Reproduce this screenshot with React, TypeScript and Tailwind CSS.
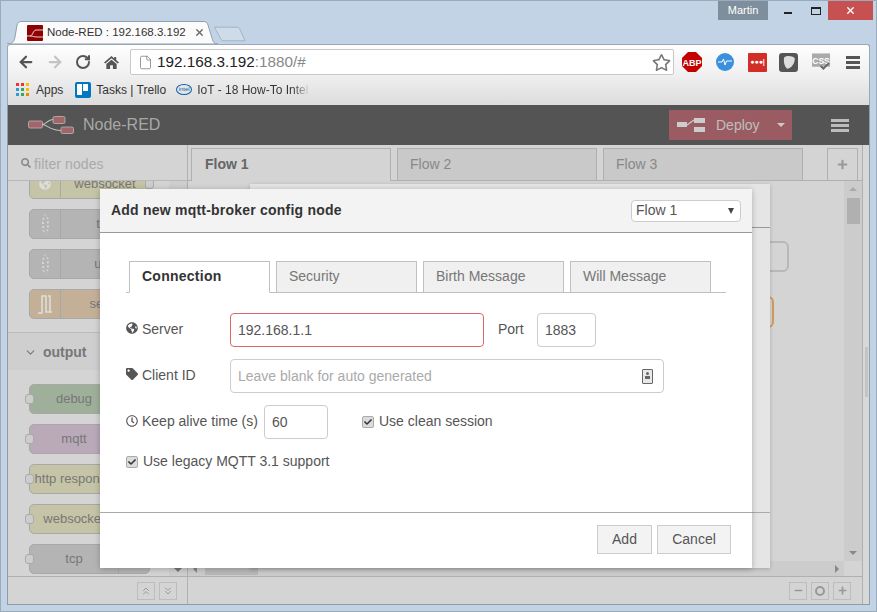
import { FaGlobeAmericas, FaTag, FaRegClock, FaCheck, FaSearch, FaPlus, FaMinus, FaRegStar } from 'react-icons/fa';
import { FiChevronDown } from 'react-icons/fi';
import { ArrowLeft, ArrowRight, RotateCw, File, X, ChevronsUp, ChevronsDown } from 'lucide-react';

function NodeRedLogo({ className, color }: { className: string; color: string }) {
  return (
    <svg viewBox="0 0 46 18" className={className}>
      <path d="M14 8.5 C19 8.5 19 3.5 25 3.5 M14 8.5 C19 8.5 22 14.5 33 14.5" stroke="#c4c4c4" strokeWidth="1.1" fill="none" />
      <rect x="0.5" y="5" width="14" height="7" rx="1.5" fill={color} stroke="#c4c4c4" strokeWidth="0.7" />
      <rect x="25" y="0.5" width="12" height="7" rx="1.5" fill={color} stroke="#c4c4c4" strokeWidth="0.7" />
      <rect x="33" y="11" width="12.5" height="6.5" rx="1.5" fill={color} stroke="#c4c4c4" strokeWidth="0.7" />
    </svg>
  );
}

function Favicon() {
  return (
    <svg viewBox="0 0 16 16" className="w-4 h-4 shrink-0">
      <rect width="16" height="16" rx="1" fill="#8f0000" />
      <path d="M0 11 H3 C6 11 6 5 9 5 H16 M3 11 C6 11 7 12 10 12 H16" stroke="#e8d0d0" strokeWidth="1" fill="none" />
    </svg>
  );
}

function BrowserTabs() {
  return (
    <div className="h-[43px] flex items-start relative shrink-0">
      <div className="relative ml-[6px] mt-[20px] w-[211px] h-[23px]">
        <svg viewBox="0 0 211 23" className="absolute inset-0 w-full h-full">
          <path d="M0 23 C5 23 7 21 8 16 L10 4 C11 1 12 0.5 15 0.5 L196 0.5 C199 0.5 200 1 201 4 L205 17 C206 21 207 23 211 23 Z" fill="#fbfbfb" stroke="#8d9fb0" strokeWidth="1" />
        </svg>
        <div className="relative flex items-center h-full pl-[20px]">
          <Favicon />
          <span className="ml-[4px] text-[11.5px] text-[#333] whitespace-nowrap">Node-RED : 192.168.3.192</span>
          <X size={11} strokeWidth={3} className="ml-[8px] text-[#666]" />
        </div>
      </div>
      <svg viewBox="0 0 34 16" className="w-[33px] h-[16px] mt-[25px] ml-[-4px]">
        <path d="M1 1 H24 C26 1 26 2 27 4 L32 15 H10 C7 15 7 13 6 11 L2 4 C1 2 0 1 1 1 Z" fill="#cedbe8" stroke="#a3b2c1" strokeWidth="1" />
      </svg>
      <div className="ml-auto flex items-start mr-[3px]">
        <div className="w-[50px] h-[19px] bg-[#7f8e9c] text-white text-[11px] leading-[19px] text-center">Martin</div>
        <div className="w-[30px] h-[19px] flex items-center justify-center ml-[5px] pt-[5px]">
          <div className="w-[8px] h-[2px] bg-[#222]" />
        </div>
        <div className="w-[25px] h-[19px] flex items-center justify-center">
          <div className="w-[10px] h-[8px] border border-t-2 border-[#222]" />
        </div>
        <div className="w-[45px] h-[19px] bg-[#c75050] flex items-center justify-center">
          <X size={11} strokeWidth={3} className="text-white" />
        </div>
      </div>
    </div>
  );
}

function Toolbar() {
  return (
    <div className="h-[61px] bg-gradient-to-b from-[#fefefe] via-[#f0f0f0] to-[#dcdcdc] rounded-t-[3px] border border-b-0 border-[#9aa8b6] shrink-0">
      <div className="flex items-center h-[31px] pt-[3px]">
        <ArrowLeft size={18} strokeWidth={3} className="ml-[9px] text-[#555]" />
        <ArrowRight size={18} strokeWidth={3} className="ml-[11px] text-[#c4c4c4]" />
        <RotateCw size={16} strokeWidth={3} className="ml-[11px] text-[#555]" />
        <svg viewBox="0 0 16 16" className="ml-[13px] w-[15px] h-[15px] text-[#555]">
          <path d="M8 1 L11 3.6 V2 H13 V5.4 L16 8 L14.6 9 L8 3.5 L1.4 9 L0 8 Z M2.5 9.5 L8 5 L13.5 9.5 V15 H9.5 V11 H6.5 V15 H2.5 Z" fill="currentColor" />
        </svg>
        <div className="ml-[11px] w-[544px] h-[26px] bg-white border border-[#c8c8c8] rounded-[2px] flex items-center pl-[7px]">
          <File size={15} strokeWidth={1.2} className="text-[#777]" />
          <span className="ml-[4px] text-[15.3px] text-[#222]">192.168.3.192<span className="text-[#888]">:1880/#</span></span>
          <FaRegStar size={19} className="ml-auto mr-[2px] text-[#777]" />
        </div>
        <svg viewBox="0 0 20 20" className="ml-[8px] w-[20px] h-[20px]">
          <polygon points="6,0 14,0 20,6 20,14 14,20 6,20 0,14 0,6" fill="#c40000" />
          <text x="10" y="13.5" textAnchor="middle" fontSize="9" fontWeight="bold" fill="white">ABP</text>
        </svg>
        <svg viewBox="0 0 18 18" className="ml-[14px] w-[18px] h-[18px]">
          <circle cx="9" cy="9" r="9" fill="#3a8fde" />
          <path d="M2 9 H6 L7.5 6 L9 12 L10.5 8 H16" stroke="white" strokeWidth="1" fill="none" />
        </svg>
        <div className="ml-[14px] w-[19px] h-[19px] bg-[#d32d27] rounded-[1px] flex items-center justify-center text-white text-[7px] font-bold">●●●|</div>
        <svg viewBox="0 0 18 18" className="ml-[12px] w-[19px] h-[19px]">
          <rect width="18" height="18" rx="3" fill="#555" />
          <path d="M5 4 C8 2 13 3 15 5 C15 10 12 14 8 15 C5 13 4 8 5 4 Z" fill="#ddd" />
        </svg>
        <svg viewBox="0 0 20 18" className="ml-[14px] w-[19px] h-[18px]">
          <rect width="19" height="14" fill="#aaa" />
          <text x="9.5" y="11" textAnchor="middle" fontSize="9" fontWeight="bold" fill="white">CSS</text>
          <path d="M9 13 L12 16 L18 10" stroke="#666" strokeWidth="2" fill="none" />
        </svg>
        <div className="ml-[15px] w-[14px] flex flex-col gap-[2px]">
          <div className="h-[3px] bg-[#555]" />
          <div className="h-[3px] bg-[#555]" />
          <div className="h-[3px] bg-[#555]" />
        </div>
      </div>
      <div className="flex items-center h-[27px] text-[12px] text-[#333] pl-[8px]">
        <div className="w-[13px] h-[13px] grid grid-cols-3 gap-[2px]">
          <div className="bg-[#e33]" /><div className="bg-[#e33]" /><div className="bg-[#fb0]" />
          <div className="bg-[#39d]" /><div className="bg-[#3a5]" /><div className="bg-[#fb0]" />
          <div className="bg-[#39d]" /><div className="bg-[#3a5]" /><div className="bg-[#e80]" />
        </div>
        <span className="ml-[7px]">Apps</span>
        <div className="ml-[12px] w-[16px] h-[16px] bg-[#0079bf] rounded-[2px] flex gap-[1px] p-[2px]">
          <div className="w-[5px] h-[11px] bg-white" />
          <div className="w-[5px] h-[7px] bg-white" />
        </div>
        <span className="ml-[5px]">Tasks | Trello</span>
        <div className="ml-[10px] w-[16px] h-[11px] border border-[#0a5fa8] rounded-[50%] text-[6px] leading-[9px] text-[#0a5fa8] text-center">intel</div>
        <span className="ml-[5px] w-[113px] whitespace-nowrap overflow-hidden bg-gradient-to-r from-[#333] from-85% to-transparent bg-clip-text text-transparent">IoT - 18 How-To Intel</span>
      </div>
    </div>
  );
}

function PaletteNode({ label, fill, icon, port, rightIcon }: { label: string; fill: string; icon?: 'wave' | 'socket' | 'serial'; port: 'left' | 'right'; rightIcon?: boolean }) {
  return (
    <div className="relative w-[121px] h-[30px] shrink-0 border border-[#a8a8a8] rounded-[5px] flex text-[13px] text-[#777]" style={{ background: fill }}>
      {port === 'left' && <div className="absolute left-[-5px] top-[9px] w-[9px] h-[10px] rounded-[3px] bg-[#cdcdcd] border border-[#aaa]" />}
      {port === 'right' && <div className="absolute right-[-5px] top-[9px] w-[9px] h-[10px] rounded-[3px] bg-[#cdcdcd] border border-[#aaa]" />}
      {icon && (
        <div className="w-[31px] border-r border-[#a8a8a8] flex items-center justify-center text-[#ddd]">
          {icon === 'wave' && <div className="w-[7px] h-[20px] border-x-2 border-dotted border-[#d5d5d5] rounded-[50%]" />}
          {icon === 'socket' && <FaGlobeAmericas size={12} />}
          {icon === 'serial' && (
            <svg viewBox="0 0 16 20" className="w-[16px] h-[20px]">
              <path d="M1 19 H5 V2 H9 V18 H15 M13 18 V2 H11" stroke="#ddd" strokeWidth="1.6" fill="none" />
            </svg>
          )}
        </div>
      )}
      <div className="flex-1 min-w-0 flex items-center justify-center overflow-hidden whitespace-nowrap leading-[28px]">{label}</div>
      {rightIcon && <div className="w-[31px] border-l border-[#a8a8a8] shrink-0" />}
    </div>
  );
}

function Palette() {
  return (
    <div className="w-[180px] flex flex-col border-r border-[#b0b0b0] shrink-0">
      <div className="h-[36px] flex items-center pl-[13px] border-b border-[#b8b8b8] text-[#aaa] text-[14px] shrink-0">
        <FaSearch size={10} className="text-[#888]" />
        <span className="ml-[3px] mt-[3px] tracking-[0.1px]">filter nodes</span>
      </div>
      <div className="flex-1 relative overflow-hidden">
        <div className="absolute right-0 inset-y-0 w-[18px] bg-[#cecece]" />
        <div className="absolute right-[5px] bottom-[4px] w-0 h-0 border-x-[4px] border-x-transparent border-t-[4px] border-t-[#777]" />
        <div className="flex flex-col mt-[-12px] relative">
          <div className="flex flex-col gap-[10px] pl-[21px]">
            <PaletteNode label="websocket" fill="#c5c4a6" icon="socket" port="right" />
            <PaletteNode label="tcp" fill="#b4b4b4" icon="wave" port="right" />
            <PaletteNode label="udp" fill="#b4b4b4" icon="wave" port="right" />
            <PaletteNode label="serial" fill="#c4b097" icon="serial" port="right" />
          </div>
          <div className="mt-[13px] h-[38px] bg-[#cfcfcf] border-t border-[#bcbcbc] flex items-center pl-[16px] pt-[2px] font-bold text-[14px] text-[#777]">
            <FiChevronDown size={13} className="mr-[6px]" />
            <span>output</span>
          </div>
          <div className="flex flex-col gap-[10px] pl-[21px] mt-[14px]">
            <PaletteNode label="debug" fill="#9fb09a" port="left" rightIcon />
            <PaletteNode label="mqtt" fill="#b9a9b9" port="left" rightIcon />
            <PaletteNode label="http response" fill="#c5c4a6" port="left" rightIcon />
            <PaletteNode label="websocket" fill="#c5c4a6" port="left" rightIcon />
            <PaletteNode label="tcp" fill="#b4b4b4" port="left" rightIcon />
          </div>
        </div>
      </div>
      <div className="h-[28px] border-t border-[#b0b0b0] flex items-center justify-end pr-[10px] gap-[4px] shrink-0">
        <div className="w-[18px] h-[18px] border border-[#bdbdbd] flex items-center justify-center text-[#999]"><ChevronsUp size={12} /></div>
        <div className="w-[18px] h-[18px] border border-[#bdbdbd] flex items-center justify-center text-[#999]"><ChevronsDown size={12} /></div>
      </div>
    </div>
  );
}

function WorkspaceTab({ label, active, ml }: { label: string; active?: boolean; ml: string }) {
  return (
    <div className={`w-[200px] ${ml} border border-b-0 border-[#b0b0b0] flex items-center text-[14px] ${active ? 'h-[33px] mb-[-1px] pb-[1px] pl-[13px] relative bg-[#d4d4d4] font-bold text-[#666]' : 'h-[32px] pl-[12px] bg-[#c9c9c9] text-[#888]'}`}>
      {label}
    </div>
  );
}

function Workspace() {
  return (
    <div className="flex-1 flex flex-col min-w-0">
      <div className="h-[36px] border-b border-[#b0b0b0] flex items-end shrink-0">
        <WorkspaceTab label="Flow 1" active ml="ml-[3px]" />
        <WorkspaceTab label="Flow 2" ml="ml-[6px]" />
        <WorkspaceTab label="Flow 3" ml="ml-[6px]" />
        <div className="w-[31px] h-[32px] ml-[24px] border border-b-0 border-[#b0b0b0] flex items-center justify-center text-[#999]">
          <FaPlus size={11} />
        </div>
      </div>
      <div className="flex-1 flex flex-col min-h-0">
        <div className="flex-1 flex min-h-0">
          <div className="flex-1 relative">
            <div className="absolute left-[560px] top-[60px] w-[41px] h-[31px] border-2 border-[#b8b8b8] rounded-[6px]" />
            <div className="absolute left-[546px] top-[115px] w-[40px] h-[32px] border-2 border-[#d29a5c] rounded-[6px]" />
          </div>
          <div className="w-[18px] bg-[#cccccc] flex flex-col items-center pt-[6px]">
            <div className="w-0 h-0 border-x-[4px] border-x-transparent border-b-[4px] border-b-[#aaa]" />
            <div className="w-[13px] h-[26px] bg-[#b0b0b0] mt-[7px]" />
            <div className="mt-auto mb-[6px] w-0 h-0 border-x-[4px] border-x-transparent border-t-[4px] border-t-[#888]" />
          </div>
        </div>
        <div className="h-[15px] bg-[#cccccc] flex items-center shrink-0">
          <div className="ml-[5px] w-0 h-0 border-y-[4px] border-y-transparent border-r-[4px] border-r-[#888]" />
          <div className="ml-[8px] w-[53px] h-[13px] bg-[#b8b8b8]" />
          <div className="ml-auto mr-[5px] w-0 h-0 border-y-[4px] border-y-transparent border-l-[4px] border-l-[#888]" />
          <div className="w-[18px] h-full bg-[#d4d4d4]" />
        </div>
      </div>
      <div className="h-[28px] border-t border-[#b0b0b0] flex items-center justify-end pr-[11px] gap-[4px] shrink-0">
        <div className="w-[18px] h-[18px] border border-[#bdbdbd] flex items-center justify-center text-[#999]"><FaMinus size={9} /></div>
        <div className="w-[18px] h-[18px] border border-[#bdbdbd] flex items-center justify-center">
          <div className="w-[10px] h-[10px] rounded-full border-2 border-[#999]" />
        </div>
        <div className="w-[18px] h-[18px] border border-[#bdbdbd] flex items-center justify-center text-[#999]"><FaPlus size={9} /></div>
      </div>
    </div>
  );
}

function NodeRedHeader() {
  return (
    <div className="h-[40px] bg-[#545454] flex items-center shrink-0">
      <NodeRedLogo className="w-[46px] h-[18px] ml-[20px]" color="#a2656a" />
      <span className="ml-[9px] text-[16px] text-[#a8a8a8]">Node-RED</span>
      <div className="ml-auto w-[123px] h-[30px] bg-[#9a5c62] flex items-center text-[#bfbfbf] text-[14px]">
        <svg viewBox="0 0 28 14" className="w-[28px] h-[14px] ml-[8px]">
          <rect x="0" y="4" width="10" height="5" fill="#ccc" />
          <rect x="17" y="0" width="11" height="5" fill="#ccc" />
          <rect x="17" y="9" width="11" height="5" fill="#ccc" />
          <path d="M10 7 L17 2" stroke="#ccc" strokeWidth="1.2" />
        </svg>
        <span className="ml-[11px]">Deploy</span>
        <div className="ml-[17px] w-0 h-0 border-x-[4px] border-x-transparent border-t-[4px] border-t-[#ccc]" />
      </div>
      <div className="ml-[39px] mr-[20px] w-[18px] flex flex-col gap-[2px]">
        <div className="h-[3px] bg-[#bbb]" />
        <div className="h-[3px] bg-[#bbb]" />
        <div className="h-[3px] bg-[#bbb]" />
      </div>
    </div>
  );
}

function FormInput({ value, placeholder, width, error, children }: { value?: string; placeholder?: string; width: string; error?: boolean; children?: React.ReactNode }) {
  return (
    <div className={`${width} h-[34px] shrink-0 rounded-[4px] border flex items-center px-[7px] text-[14px] ${error ? 'border-[#d66]' : 'border-[#ccc]'} ${placeholder ? 'text-[#aaa]' : 'text-[#555]'}`}>
      {value ?? placeholder}
      {children}
    </div>
  );
}

function Checkbox() {
  return (
    <div className="w-[12px] h-[12px] rounded-[2px] bg-[#dcdcdc] border border-[#aaa] flex items-center justify-center shrink-0">
      <FaCheck size={8} className="text-[#333]" />
    </div>
  );
}

function FormTab({ label, active }: { label: string; active?: boolean }) {
  return (
    <div className={`w-[141px] border border-[#c0c0c0] flex items-center pl-[12px] pb-[1px] text-[14px] ${active ? 'h-[32px] bg-white border-b-white font-bold tracking-[0.25px] text-[#333] mb-[-1px]' : 'h-[31px] bg-[#f0f0f0] text-[#777] border-b-0'}`}>
      {label}
    </div>
  );
}

function ConfigDialog() {
  return (
    <div className="absolute left-[92px] top-[84px] w-[652px] h-[379px] bg-white shadow-[0_1px_6px_rgba(0,0,0,0.25)] flex flex-col text-[#555]">
      <div className="h-[44px] bg-[#f3f3f3] border-b border-[#999] flex items-center justify-between pl-[11px] pr-[11px] shrink-0">
        <span className="font-bold text-[14px] tracking-[0.22px] text-[#333]">Add new mqtt-broker config node</span>
        <div className="w-[110px] h-[22px] bg-white border border-[#ccc] rounded-[4px] flex items-center justify-between px-[4px] text-[14px]">
          Flow 1
          <div className="w-0 h-0 border-x-[3px] border-x-transparent border-t-[6px] border-t-[#444] mr-[2px]" />
        </div>
      </div>
      <div className="flex-1 pl-[26px] pr-[26px] pt-[28px] min-h-0">
        <div className="flex gap-[6px] items-end h-[32px] border-b border-[#c0c0c0] pl-[3px]">
          <FormTab label="Connection" active />
          <FormTab label="Security" />
          <FormTab label="Birth Message" />
          <FormTab label="Will Message" />
        </div>
        <div className="flex items-center mt-[20px] text-[14px]">
          <FaGlobeAmericas size={12} className="shrink-0 mt-[-4px]" />
          <span className="ml-[4px] w-[88px] mt-[-1px]">Server</span>
          <FormInput value="192.168.1.1" width="w-[254px]" error />
          <span className="ml-[14px] w-[39px] mt-[-1px]">Port</span>
          <FormInput value="1883" width="w-[59px]" />
        </div>
        <div className="flex items-center mt-[12px] text-[14px]">
          <FaTag size={12} className="shrink-0 mt-[-4px]" />
          <span className="ml-[4px] w-[88px] mt-[-1px]">Client ID</span>
          <FormInput placeholder="Leave blank for auto generated" width="w-[434px]">
            <div className="ml-auto mr-[3px] w-[11px] h-[15px] border border-[#666] bg-[#e8e8e8] rounded-[1px] flex flex-col items-center pt-[2px]">
              <div className="w-[3px] h-[3px] bg-[#666] rounded-full" />
              <div className="w-[5px] h-[3px] bg-[#666] mt-[1px]" />
            </div>
          </FormInput>
        </div>
        <div className="flex items-center mt-[12px] text-[14px]">
          <FaRegClock size={12} className="shrink-0 mt-[-3px]" />
          <span className="ml-[4px] w-[122px] whitespace-nowrap mt-[-1px]">Keep alive time (s)</span>
          <FormInput value="60" width="w-[64px]" />
          <div className="ml-[34px]"><Checkbox /></div>
          <span className="ml-[5px] mt-[-1px]">Use clean session</span>
        </div>
        <div className="flex items-center mt-[12px] text-[14px]">
          <Checkbox />
          <span className="ml-[5px]">Use legacy MQTT 3.1 support</span>
        </div>
      </div>
      <div className="h-[56px] border-t border-[#aaa] flex items-center justify-end pr-[21px] pb-[3px] gap-[5px] shrink-0 text-[14px]">
        <div className="w-[55px] h-[29px] bg-[#f3f3f3] border border-[#ccc] flex items-center justify-center">Add</div>
        <div className="w-[74px] h-[29px] bg-[#f3f3f3] border border-[#ccc] flex items-center justify-center">Cancel</div>
      </div>
    </div>
  );
}

export default function App() {
  return (
    <div className="w-[877px] h-[612px] bg-[#c1d3e4] border border-[#9aabbb] flex flex-col overflow-hidden font-['Liberation_Sans',Arial,sans-serif]">
      <BrowserTabs />
      <div className="mx-[6px] flex flex-col flex-1 min-h-0 mb-[6px]">
        <Toolbar />
        <div className="flex-1 flex flex-col min-h-0 bg-[#d4d4d4] border-x border-b border-[#8f9ba7] relative">
          <NodeRedHeader />
          <div className="flex-1 flex min-h-0">
            <Palette />
            <Workspace />
            <div className="w-[7px] shrink-0 border-l border-[#b0b0b0] bg-[#d8d8d8] pl-[2px] pt-[202px]">
              <div className="w-[3px] h-[50px] bg-[#c4c4c4]" />
            </div>
          </div>
          {/* older dialog sitting behind the config one */}
          <div className="absolute left-[242px] top-[79px] w-[520px] h-[384px] bg-[#e5e5e5] shadow-[0_1px_4px_rgba(0,0,0,0.2)]">
            <div className="h-[44px] border-b border-[#999]" />
            <div className="absolute left-0 right-0 top-[328px] border-t border-[#aaa]" />
          </div>
          <ConfigDialog />
        </div>
      </div>
    </div>
  );
}
